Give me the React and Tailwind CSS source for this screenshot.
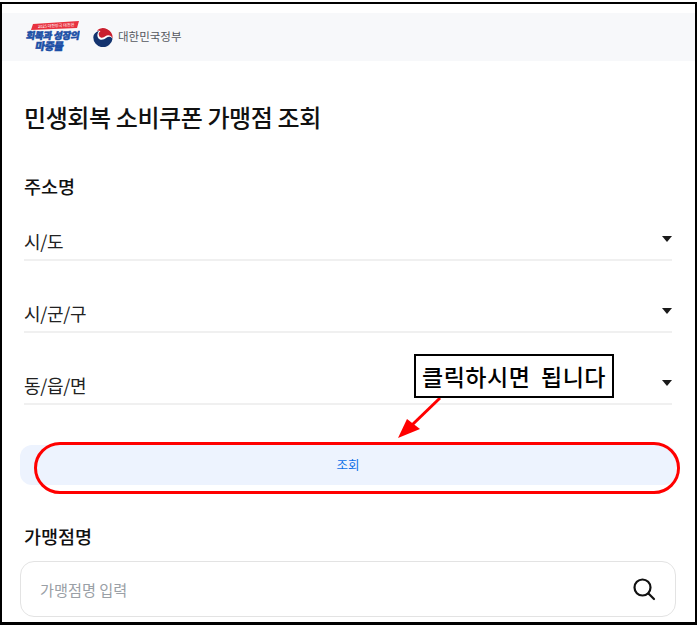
const KR = '"Noto Sans CJK KR", sans-serif';

function Caret() {
  return (
    <svg width="10" height="6" viewBox="0 0 10 6" className="mb-[3px] shrink-0">
      <path d="M0 0h10L5 6z" fill="#1a1a1a" />
    </svg>
  );
}

function SelectRow({ label, className }) {
  return (
    <div className={`flex h-[44px] items-center justify-between border-b-2 border-[#f0f0f0] pt-[4px] ${className}`}>
      <span className="mt-[2px] text-[18px] leading-[26px] tracking-[-0.3px] text-[#222]">{label}</span>
      <Caret />
    </div>
  );
}

// 캠페인 로고
function CampaignLogo() {
  return (
    <svg width="56" height="32" viewBox="0 0 56 32" className="shrink-0">
      <path d="M9 3L55 0L53 7L7 9z" fill="#e8323f" />
      <text x="14" y="7" fontSize="4" fill="#fff" fontFamily={KR} transform="rotate(-3 14 7)">2025 대한민국 대전환</text>
      <g fontFamily={KR} fontWeight="900" fill="#1c4fa6" transform="skewX(-10)">
        <text x="5" y="18" fontSize="9.600" letterSpacing="-0.3" stroke="#1c4fa6" strokeWidth="0.5">회복과 성장의</text>
        <text x="16" y="29" fontSize="10.500" letterSpacing="-0.4" stroke="#1c4fa6" strokeWidth="0.5">마중물</text>
      </g>
    </svg>
  );
}

function GovLogo() {
  return (
    <svg width="20" height="20" viewBox="0 0 20 20" className="shrink-0">
      <circle cx="10" cy="10" r="9.800" fill="#fff" />
      <path d="M3.600 3.500A9.700 9.700 0 0 1 19.600 11.600C18.500 8.300 14.800 7.300 12.400 9.300C10.400 11 7.500 11.300 6.300 9.200C5.200 7.300 5.600 5.200 7.500 3.900C6 3.500 4.800 3.200 3.600 3.500z" fill="#c9202f" />
      <path d="M.3 10A9.700 9.700 0 0 0 19.600 11.800C18.300 9.500 15.400 9.200 13.400 10.800C11 12.800 7.500 13.600 5.500 11.400C3.800 9.500 4 6.400 6.200 3.800C2.700 5 .3 7.200 .3 10z" fill="#14346f" />
    </svg>
  );
}

export default function App() {
  return (
    <div className="h-[630px] w-[699px] bg-white pt-[2px]" style={{ fontFamily: KR }}>
      <div className="relative h-[623px] w-[697px] overflow-hidden border-x-2 border-t-2 border-b-[3px] border-black bg-white pt-[9px]">
        <div className="flex h-[48px] items-center bg-[#f7f8fa] pl-[22px]">
          <CampaignLogo />
          <div className="ml-[13px] flex items-center gap-[5px]">
            <GovLogo />
            <span className="text-[11.5px] text-[#55595f]">대한민국정부</span>
          </div>
        </div>

        <div className="pl-[18px] pr-[19px]">
          <div className="px-[4px]">
            <h1 className="mt-[38px] text-[24px] font-medium leading-[36px] tracking-[-0.4px] text-[#111]">
              민생회복 소비쿠폰 가맹점 조회
            </h1>
            <h2 className="mt-[38px] text-[18.5px] font-medium leading-[26px] text-[#111]">주소명</h2>
            <SelectRow label="시/도" className="mt-[18px]" />
            <SelectRow label="시/군/구" className="mt-[28px]" />
            <SelectRow label="동/읍/면" className="mt-[28px]" />
          </div>

          <button className="mt-[40px] flex h-[40px] w-full items-center justify-center rounded-[12px] bg-[#edf3fe] text-[12.5px] text-[#0b6fe8]">
            조회
          </button>

          <h2 className="mt-[38px] pl-[4px] text-[18.5px] font-medium leading-[26px] text-[#111]">가맹점명</h2>
          <div className="mt-[12px] flex h-[56px] items-center justify-between rounded-[14px] border border-[#e3e3e3] pl-[19px] pr-[18px]">
            <span className="text-[15.2px] text-[#9aa0a6]">가맹점명 입력</span>
            <svg width="26" height="26" viewBox="0 0 26 26" fill="none" stroke="#111" strokeWidth="2.200" strokeLinecap="round">
              <circle cx="11.500" cy="11.500" r="8" />
              <path d="M17.500 17.500l5.500 5.500" />
            </svg>
          </div>
        </div>

        <div className="absolute left-[32px] top-[438px] h-[52px] w-[646px] rounded-[26px] border-[3px] border-[#ff0000]" />
        <svg width="60" height="50" viewBox="0 0 60 50" className="absolute left-[394px] top-[392px]">
          <path d="M44 2L16 29" stroke="#ff0000" strokeWidth="3" />
          <path d="M2 42L11 23L24 33z" fill="#ff0000" />
        </svg>
        <div className="absolute left-[412px] top-[350px] flex h-[44px] w-[200px] items-center justify-center border-2 border-black bg-white text-[23px] font-medium tracking-[0.500px] text-black [word-spacing:5px]">
          클릭하시면 됩니다
        </div>
      </div>
    </div>
  );
}
